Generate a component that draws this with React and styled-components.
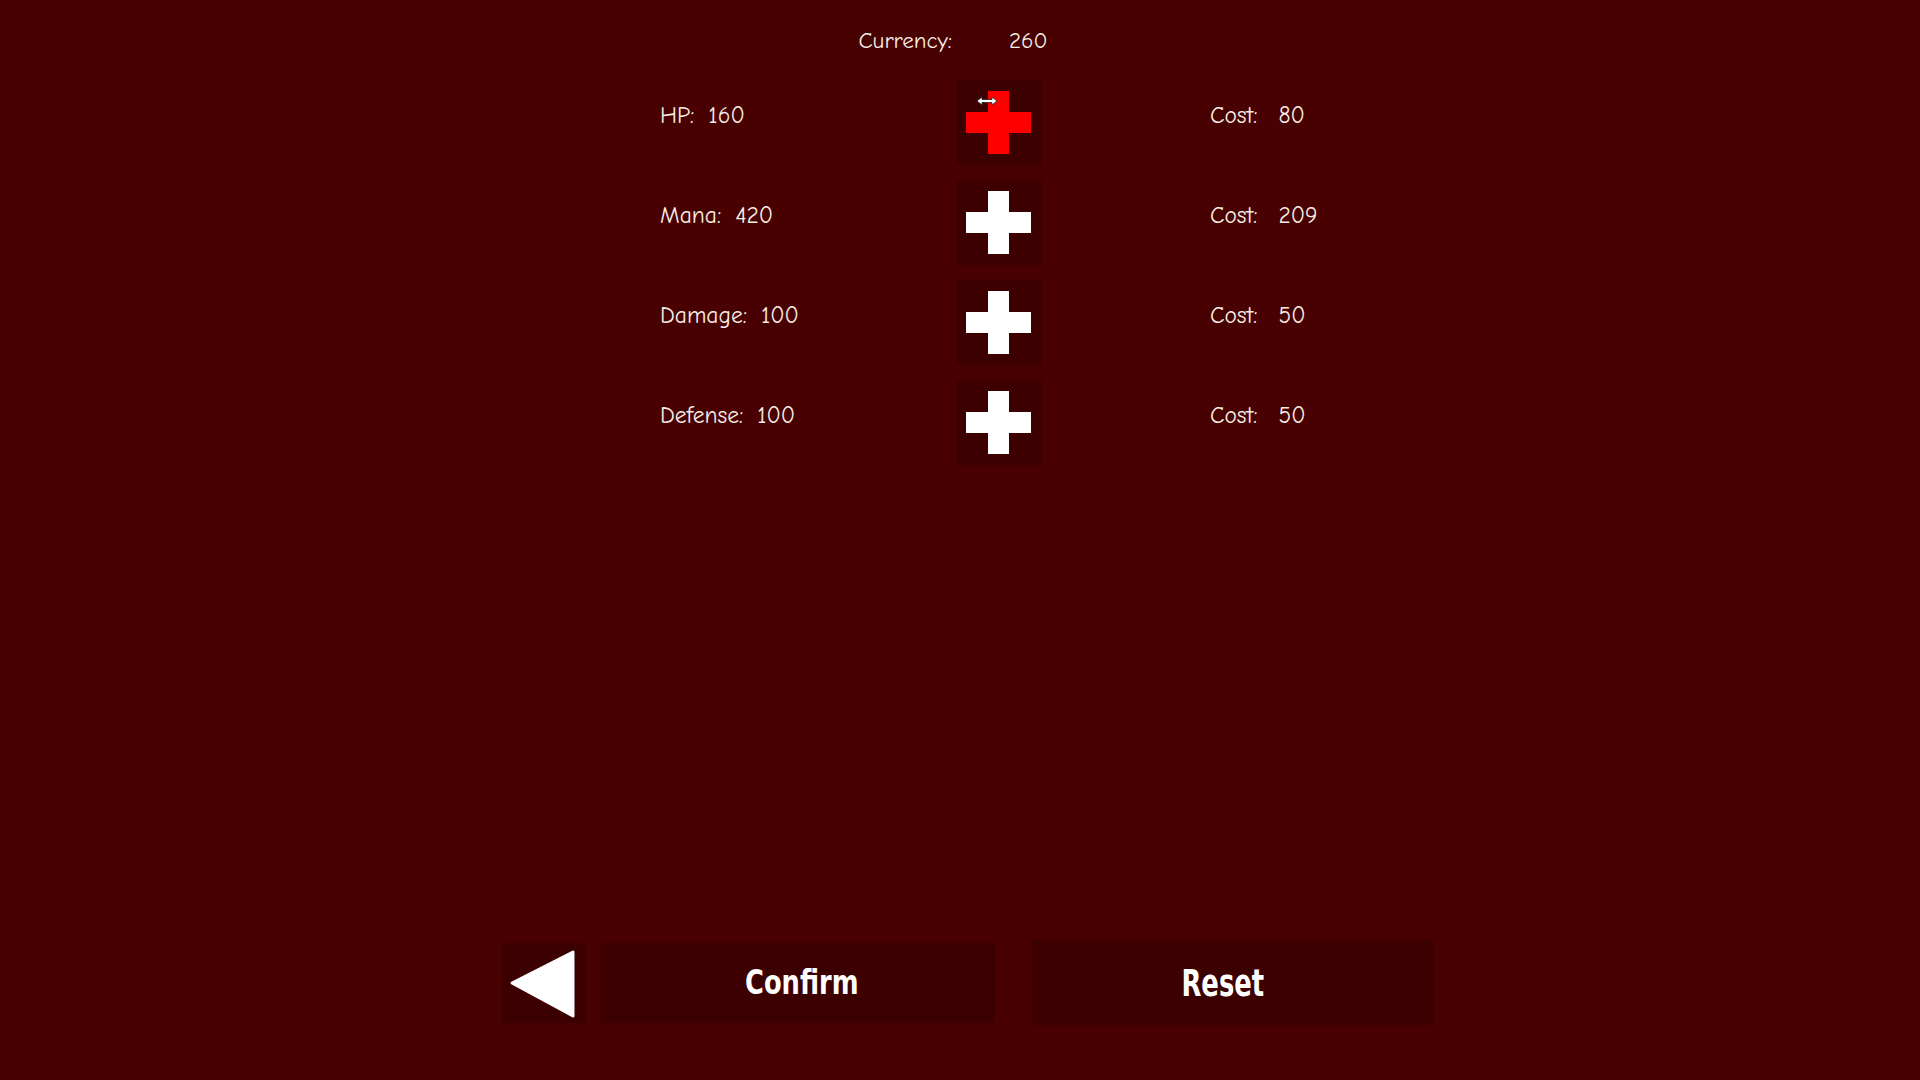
import React from 'react';
import styled, { createGlobalStyle } from 'styled-components';

const GlobalStyle = createGlobalStyle`
  html, body {
    margin: 0;
    padding: 0;
    background: #490000;
  }
  body {
    font-family: "Comic Sans MS", "Comic Neue", "Open Sans", sans-serif;
    color: #f6eee6;
  }
`;

const Screen = styled.div`
  width: 1920px;
  height: 1080px;
  display: flex;
  flex-direction: column;
  overflow: hidden;
`;

const Header = styled.div`
  height: 80px;
  display: flex;
  justify-content: center;
  padding-right: 14px;
  gap: 57px;
  box-sizing: border-box;
  padding-top: 27px;
  font-size: 23px;
  line-height: 28px;
`;

const Stats = styled.div`
  display: grid;
  grid-template-columns: 297px 253px auto;
  grid-auto-rows: 100px;
  padding-left: 660px;
`;

const Cell = styled.div`
  display: flex;
  align-items: center;
  height: 85px;
  box-sizing: border-box;
  padding-bottom: ${p => (p.text ? 14 : 0)}px;
  gap: ${p => p.gap || 14}px;
  font-size: 23.5px;
  line-height: 28px;
`;

const PlusButton = styled.button`
  position: relative;
  width: 85px;
  height: 85px;
  padding: 0;
  border: none;
  background: #3d0000;
  cursor: pointer;
  display: block;

  svg {
    display: block;
  }
`;

const Cursor = styled.svg`
  position: absolute;
  left: 19px;
  top: 16px;
`;

const Footer = styled.div`
  margin-top: auto;
  display: flex;
  align-items: center;
  padding: 0 0 55px 502px;
`;

const BackButton = styled.button`
  width: 83px;
  height: 80px;
  padding: 0;
  border: none;
  background: #3d0000;
  margin-right: 15px;
  cursor: pointer;
`;

const ActionButton = styled.button`
  width: ${p => p.w}px;
  height: ${p => p.h}px;
  margin-right: ${p => p.mr || 0}px;
  padding: 0;
  border: none;
  background: #3d0000;
  color: #ffffff;
  cursor: pointer;
  display: flex;
  align-items: center;
  justify-content: center;
`;

const ActionLabel = styled.span`
  display: inline-block;
  font-family: Impact, "DejaVu Sans", sans-serif;
  font-weight: 700;
  font-size: ${p => p.fs}px;
  transform: scaleX(${p => p.sx});
  margin-left: ${p => p.shift || 0}px;
`;

const Cross = ({ color }) => (
  <svg width="85" height="85" viewBox="0 0 85 85">
    <rect x="9" y="32" width="65" height="21" fill={color} />
    <rect x="31" y="11" width="21" height="63" fill={color} />
  </svg>
);

const stats = [
  { label: 'HP:', value: 160, cost: 80, active: true },
  { label: 'Mana:', value: 420, cost: 209 },
  { label: 'Damage:', value: 100, cost: 50 },
  { label: 'Defense:', value: 100, cost: 50 },
];

const App = () => (
  <>
    <GlobalStyle />
    <Screen>
      <Header>
        <span>Currency:</span>
        <span>260</span>
      </Header>
      <Stats>
        {stats.map(s => (
          <React.Fragment key={s.label}>
            <Cell text>
              <span>{s.label}</span>
              <span>{s.value}</span>
            </Cell>
            <Cell>
              <PlusButton>
                <Cross color={s.active ? '#ff0000' : '#ffffff'} />
                {s.active && (
                  <Cursor width="22" height="10" viewBox="0 0 22 10">
                    <path
                      d="M1 5 L6 1 L6 3.5 L16 3.5 L16 1 L21 5 L16 9 L16 6.5 L6 6.5 L6 9 Z"
                      fill="#ffffff"
                      stroke="#222"
                      strokeWidth="0.8"
                    />
                  </Cursor>
                )}
              </PlusButton>
            </Cell>
            <Cell text gap={21}>
              <span>Cost:</span>
              <span>{s.cost}</span>
            </Cell>
          </React.Fragment>
        ))}
      </Stats>
      <Footer>
        <BackButton>
          <svg width="83" height="80" viewBox="0 0 83 80">
            <polygon
              points="10,40 71,9 71,73"
              fill="#ffffff"
              stroke="#ffffff"
              strokeWidth="3"
              strokeLinejoin="round"
            />
          </svg>
        </BackButton>
        <ActionButton w={395} h={80} mr={37}>
          <ActionLabel fs={33} sx={0.78} shift={8}>Confirm</ActionLabel>
        </ActionButton>
        <ActionButton w={401} h={85}>
          <ActionLabel fs={38} sx={0.68} shift={-20}>Reset</ActionLabel>
        </ActionButton>
      </Footer>
    </Screen>
  </>
);

export default App;
